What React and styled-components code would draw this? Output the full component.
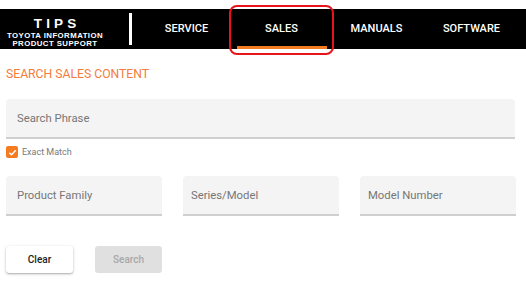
import React from "react";
import styled, { createGlobalStyle } from "styled-components";

const Global = createGlobalStyle`
  html, body { margin: 0; padding: 0; background: #fff; }
  body { font-family: Roboto, "Noto Sans", Arial, sans-serif; }
  * { box-sizing: border-box; }
`;

const Page = styled.div`
  width: 526px;
  height: 282px;
  padding-top: 9px;
  position: relative;
  overflow: hidden;
`;

const Header = styled.header`
  height: 40px;
  background: #000;
  display: flex;
  align-items: stretch;
`;

const Logo = styled.div`
  width: 110px;
  display: flex;
  flex-direction: column;
  align-items: center;
  justify-content: center;
  color: #fff;
  font-family: "Liberation Sans", Arial, sans-serif;
  font-weight: 700;
  line-height: 1;
  padding-top: 7px;
`;

const LogoTitle = styled.div`
  font-size: 13.5px;
  line-height: 12px;
  letter-spacing: 4.2px;
  margin-right: -4.2px;
  margin-bottom: 2px;
`;

const LogoLine = styled.div`
  font-size: 7.8px;
  letter-spacing: 0.45px;
  line-height: 7.8px;
`;

const Divider = styled.div`
  width: 3px;
  height: 32px;
  background: #fff;
  align-self: center;
  margin-left: 19px;
  margin-right: 7px;
`;

const Nav = styled.nav`
  display: flex;
`;

const Tab = styled.div`
  width: 95px;
  position: relative;
  display: flex;
  align-items: center;
  justify-content: center;
  color: #fff;
  font-size: 11px;
  font-weight: 500;
  padding-bottom: 1px;
`;

const Underline = styled.div`
  position: absolute;
  left: 3px;
  right: 2px;
  bottom: 0px;
  height: 3px;
  background: #f47b20;
`;

const Highlight = styled.div`
  position: absolute;
  left: 229px;
  top: 5px;
  width: 105px;
  height: 50px;
  border: 2px solid #e8141b;
  border-radius: 8px;
  pointer-events: none;
`;

const Content = styled.main`
  padding: 17px 11px 0 6px;
`;

const Title = styled.h1`
  margin: 0;
  font-size: 12.2px;
  font-weight: 400;
  color: #f47c3c;
  line-height: 16px;
`;

const Field = styled.div`
  height: 40px;
  background: #f4f4f4;
  border-radius: 4px 4px 0 0;
  border-bottom: 2px solid #cfcfcf;
  display: flex;
  align-items: center;
  padding-left: ${(p) => (p.$wide ? "11px" : "8px")};
  font-size: 11.3px;
  color: #767676;
`;

const SearchField = styled(Field)`
  margin-top: 17px;
`;

const CheckRow = styled.label`
  display: flex;
  align-items: center;
  gap: 4px;
  margin-top: 7px;
  height: 12px;
  font-size: 9px;
  color: #7a7a7a;
`;

const Box = styled.span`
  width: 12px;
  height: 12px;
  border-radius: 2px;
  background: #f47b20;
  display: flex;
  align-items: center;
  justify-content: center;
`;

const Row = styled.div`
  display: grid;
  grid-template-columns: 156px 156px 156px;
  column-gap: 21px;
  margin-top: 18px;
`;

const Buttons = styled.div`
  display: flex;
  gap: 22px;
  margin-top: 30px;
`;

const Button = styled.button`
  width: 67px;
  height: 27px;
  border: none;
  border-radius: 3px;
  font-family: Roboto, Arial, sans-serif;
  font-size: 10px;
  font-weight: 500;
  background: ${(p) => (p.$disabled ? "#e0e0e0" : "#fff")};
  color: ${(p) => (p.$disabled ? "#a8a8a8" : "#222")};
  box-shadow: ${(p) =>
    p.$disabled
      ? "none"
      : "0 1px 3px rgba(0,0,0,0.25), 0 1px 1px rgba(0,0,0,0.12)"};
  padding: 0;
`;

export default function App() {
  return (
    <>
      <Global />
      <Page>
        <Header>
          <Logo>
            <LogoTitle>TIPS</LogoTitle>
            <LogoLine>TOYOTA INFORMATION</LogoLine>
            <LogoLine>PRODUCT SUPPORT</LogoLine>
          </Logo>
          <Divider />
          <Nav>
            <Tab>SERVICE</Tab>
            <Tab>
              SALES
              <Underline />
            </Tab>
            <Tab>MANUALS</Tab>
            <Tab>SOFTWARE</Tab>
          </Nav>
        </Header>
        <Highlight />
        <Content>
          <Title>SEARCH SALES CONTENT</Title>
          <SearchField $wide>Search Phrase</SearchField>
          <CheckRow>
            <Box>
              <svg width="9" height="9" viewBox="0 0 10 10">
                <path d="M1.5 5.2 L4 7.6 L8.6 2.6" fill="none" stroke="#fff" strokeWidth="1.6" />
              </svg>
            </Box>
            Exact Match
          </CheckRow>
          <Row>
            <Field $wide>Product Family</Field>
            <Field>Series/Model</Field>
            <Field>Model Number</Field>
          </Row>
          <Buttons>
            <Button>Clear</Button>
            <Button $disabled>Search</Button>
          </Buttons>
        </Content>
      </Page>
    </>
  );
}
